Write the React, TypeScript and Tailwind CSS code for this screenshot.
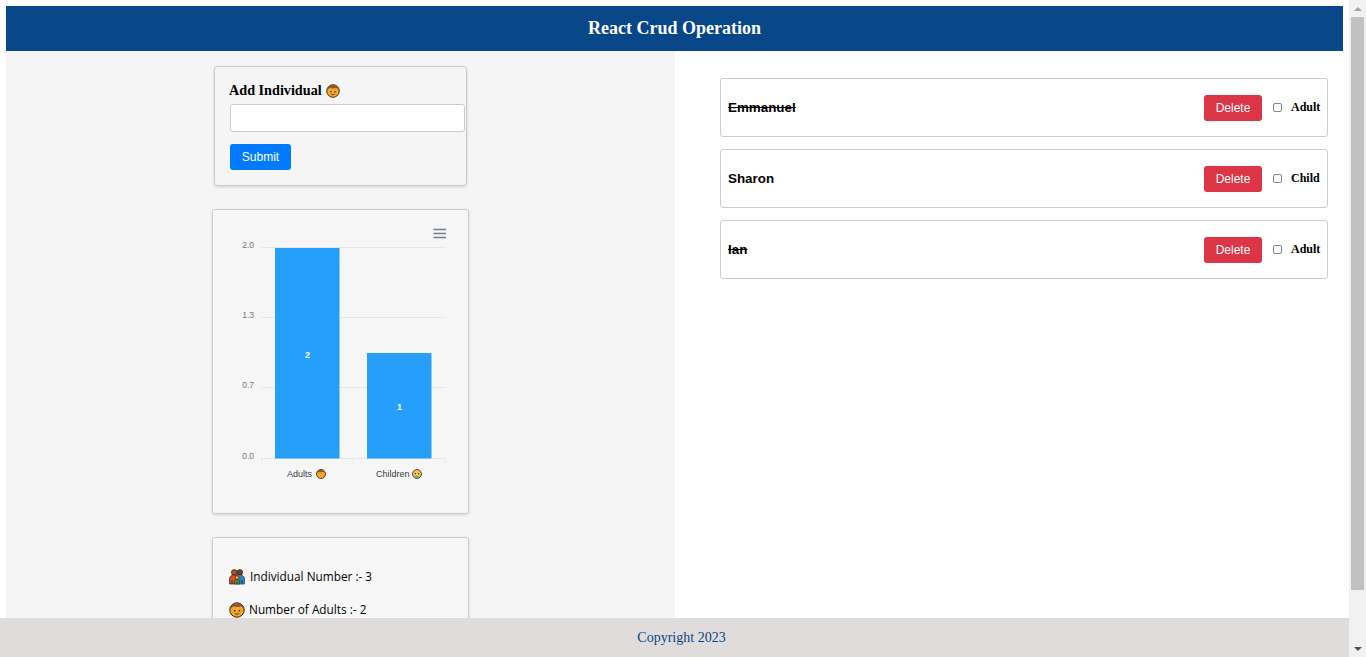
import React from 'react';

const BoyEmoji = ({ size = 14 }: { size?: number }) => (
  <svg width={size} height={size} viewBox="0 0 16 16" className="inline-block shrink-0">
    <circle cx="8" cy="8" r="7.2" fill="#f4a72c" stroke="#2b1d0e" strokeWidth="1" />
    <path d="M1.400 7.500C1.200 3.400 4.400 1 8 1s6.800 2.400 6.600 6.500c-.7-1.400-1.400-2.400-2.600-3-2 .7-5.600.7-7.600.1C3 5.200 2.100 6.200 1.400 7.500z" fill="#8f5a26" />
    <circle cx="5.600" cy="8.800" r=".8" fill="#2b1d0e" />
    <circle cx="10.400" cy="8.800" r=".8" fill="#2b1d0e" />
    <path d="M5.800 11.400c1.200 1 3.200 1 4.400 0" fill="none" stroke="#2b1d0e" strokeWidth=".8" />
  </svg>
);

const FamilyEmoji = ({ size = 16 }: { size?: number }) => (
  <svg width={size} height={size} viewBox="0 0 16 16" className="inline-block shrink-0">
    <circle cx="5.200" cy="3.400" r="2.800" fill="#a5562a" stroke="#2b1d0e" strokeWidth=".7" />
    <circle cx="10.800" cy="3.400" r="2.800" fill="#7b3f1d" stroke="#2b1d0e" strokeWidth=".7" />
    <path d="M.6 15V9.500C.6 7.200 2.800 6 5 6h6c2.200 0 4.400 1.200 4.400 3.500V15z" fill="#d9502e" stroke="#2b1d0e" strokeWidth=".7" />
    <path d="M8 6h3c2.200 0 4.400 1.200 4.400 3.500V15H11z" fill="#2d7fc1" />
    <circle cx="8" cy="8.600" r="1.900" fill="#f6a623" stroke="#2b1d0e" strokeWidth=".6" />
    <path d="M5.400 15v-3c0-1 1-1.600 2.600-1.600s2.600.6 2.600 1.600v3z" fill="#3ea05a" stroke="#2b1d0e" strokeWidth=".6" />
    <path d="M3 11v4M13 11v4M8 11.500V15" stroke="#2b1d0e" strokeWidth=".7" />
  </svg>
);

const people = [
  { name: 'Emmanuel', done: true, kind: 'Adult' },
  { name: 'Sharon', done: false, kind: 'Child' },
  { name: 'Ian', done: true, kind: 'Adult' },
];

const ticks = [
  { label: '2.0', y: 247.5 },
  { label: '1.3', y: 317.5 },
  { label: '0.7', y: 387.5 },
  { label: '0.0', y: 458.5 },
];

// viewBox uses page coordinates so the chart numbers read straight off the screenshot
const Chart = () => (
  <svg width="255" height="303" viewBox="213 210 255 303" className="block">
    {ticks.map((t) => (
      <g key={t.label}>
        <line x1="261" x2="446" y1={t.y} y2={t.y} stroke="#e6e7e8" />
        <text x="254" y={t.y} textAnchor="end" fontSize="8.500" fill="#777777" fontFamily="Liberation Sans, sans-serif">
          {t.label}
        </text>
      </g>
    ))}
    <rect x="275" y="248" width="64.500" height="210.500" fill="#269ffb" />
    <rect x="367" y="353" width="64.500" height="105.500" fill="#269ffb" />
    <text x="307.500" y="358" textAnchor="middle" fontSize="9" fontWeight="700" fill="#fff" fontFamily="Liberation Sans, sans-serif">2</text>
    <text x="399.500" y="410" textAnchor="middle" fontSize="9" fontWeight="700" fill="#fff" fontFamily="Liberation Sans, sans-serif">1</text>
    <path d="M261.500 458.500v5M353.500 458.500v5M445.500 458.500v5" stroke="#e6e7e8" />
    <path d="M433.500 229.500h12.500M433.500 233.500h12.500M433.500 237.500h12.500" stroke="#6e8192" strokeWidth="1.300" />
    <text x="287" y="477" fontSize="9" fill="#373d3f" fontFamily="Liberation Sans, sans-serif">Adults</text>
    <svg x="316" y="469" width="10" height="10" viewBox="0 0 16 16">
      <circle cx="8" cy="8" r="7.200" fill="#f4a72c" stroke="#2b1d0e" strokeWidth="1.200" />
      <path d="M1.400 7.500C1.200 3.400 4.400 1 8 1s6.800 2.400 6.600 6.500c-.7-1.400-1.400-2.400-2.600-3-2 .7-5.600.7-7.600.1C3 5.200 2.100 6.200 1.400 7.500z" fill="#8f5a26" />
    </svg>
    <text x="376" y="477" fontSize="9" fill="#373d3f" fontFamily="Liberation Sans, sans-serif">Children</text>
    <svg x="412" y="469" width="10" height="10" viewBox="0 0 16 16">
      <circle cx="8" cy="8" r="7.200" fill="#f6c04d" stroke="#2b1d0e" strokeWidth="1.200" />
      <circle cx="5.400" cy="7.500" r="1" fill="#2b1d0e" />
      <circle cx="10.600" cy="7.500" r="1" fill="#2b1d0e" />
      <path d="M4 12c1-1.800 7-1.800 8 0-.8 2.400-7.200 2.400-8 0z" fill="#4fa8a0" />
    </svg>
  </svg>
);

const Scrollbar = () => (
  <div className="w-[17px] h-full shrink-0 bg-[#f1f1f1] flex flex-col items-center">
    <div className="h-[17px] w-full flex items-center justify-center">
      <div className="w-0 h-0 border-x-[4px] border-x-transparent border-b-[4px] border-b-[#a3a3a3]" />
    </div>
    <div className="w-[13px] h-[573px] bg-[#c1c1c1]" />
    <div className="flex-1 w-full flex items-end justify-center pb-[6px]">
      <div className="w-0 h-0 border-x-[4px] border-x-transparent border-t-[4px] border-t-[#505050]" />
    </div>
  </div>
);

export default function App() {
  return (
    <div className="h-screen flex overflow-hidden bg-white">
      <div className="flex-1 min-w-0 flex flex-col">
        <div className="flex-1 min-h-0 overflow-hidden pt-[6px] px-[6px]">
          <header className="h-[45px] bg-[#074687] flex items-center justify-center font-['Liberation_Serif',serif] font-bold text-[18px] text-white">
            React Crud Operation
          </header>
          <div className="flex h-full">
            {/* left column */}
            <div className="w-[669px] shrink-0 bg-[#f5f5f5] flex flex-col items-center pt-[15px]">
              <div className="w-[253px] h-[120px] shrink-0 rounded-[4px] border border-[#cccccc] bg-[#f5f5f5] shadow-[0_1px_3px_rgba(0,0,0,0.15)] pl-[14px] pt-[15px]">
                <div className="flex items-center gap-[4px] h-[18px] font-['Liberation_Serif',serif] font-bold text-[14.2px] text-black">
                  Add Individual <BoyEmoji />
                </div>
                <input
                  type="text"
                  className="block mt-[4px] ml-px w-[235px] h-[28px] bg-white border border-[#cccccc] rounded-[3px]"
                />
                <button className="block mt-[12px] ml-px w-[61px] h-[26px] bg-[#007bff] rounded-[3px] text-white text-[12px] font-['Liberation_Sans',sans-serif]">
                  Submit
                </button>
              </div>

              <div className="mt-[23px] w-[257px] h-[305px] shrink-0 rounded-[3px] border border-[#cccccc] bg-[#f6f6f6] shadow-[0_1px_3px_rgba(0,0,0,0.15)]">
                <Chart />
              </div>

              <div className="mt-[23px] w-[257px] h-[160px] shrink-0 rounded-[3px] border border-[#cccccc] bg-[#f7f7f7] shadow-[0_1px_3px_rgba(0,0,0,0.15)] pl-[16px] pt-[30px] font-['Open_Sans',sans-serif] text-[11.8px] text-black">
                <div className="flex items-center gap-[5px] h-[18px]">
                  <FamilyEmoji /> Individual Number :- 3
                </div>
                <div className="flex items-center gap-[4px] h-[18px] mt-[15px]">
                  <BoyEmoji size={16} /> Number of Adults :- 2
                </div>
              </div>
            </div>

            {/* right column */}
            <div className="flex-1 min-w-0 pt-[27px] pl-[45px] pr-[15px] flex flex-col gap-[12px]">
              {people.map((p) => (
                <div key={p.name} className="h-[59px] rounded-[3px] border border-[#cccccc] flex items-center pl-[7px] pr-[7px]">
                  <span className={`flex-1 pt-px font-['Liberation_Sans',sans-serif] font-bold text-[13.4px] text-black ${p.done ? 'line-through' : ''}`}>
                    {p.name}
                  </span>
                  <button className="w-[58px] h-[26px] bg-[#dc3545] rounded-[3px] text-white text-[12px] font-['Liberation_Sans',sans-serif]">
                    Delete
                  </button>
                  <input type="checkbox" className="ml-[11px] w-[9px] h-[9px] appearance-none bg-white border border-[#858585] rounded-[2px]" />
                  <span className="ml-[9px] w-[29px] -mt-[2px] font-['Liberation_Serif',serif] font-bold text-[12px] text-black">
                    {p.kind}
                  </span>
                </div>
              ))}
            </div>
          </div>
        </div>
        <footer className="h-[39px] shrink-0 bg-[#e0dcdc] flex items-center justify-center pl-[14px] font-['Liberation_Serif',serif] text-[14px] text-[#0a4587]">
          Copyright 2023
        </footer>
      </div>
      <Scrollbar />
    </div>
  );
}
